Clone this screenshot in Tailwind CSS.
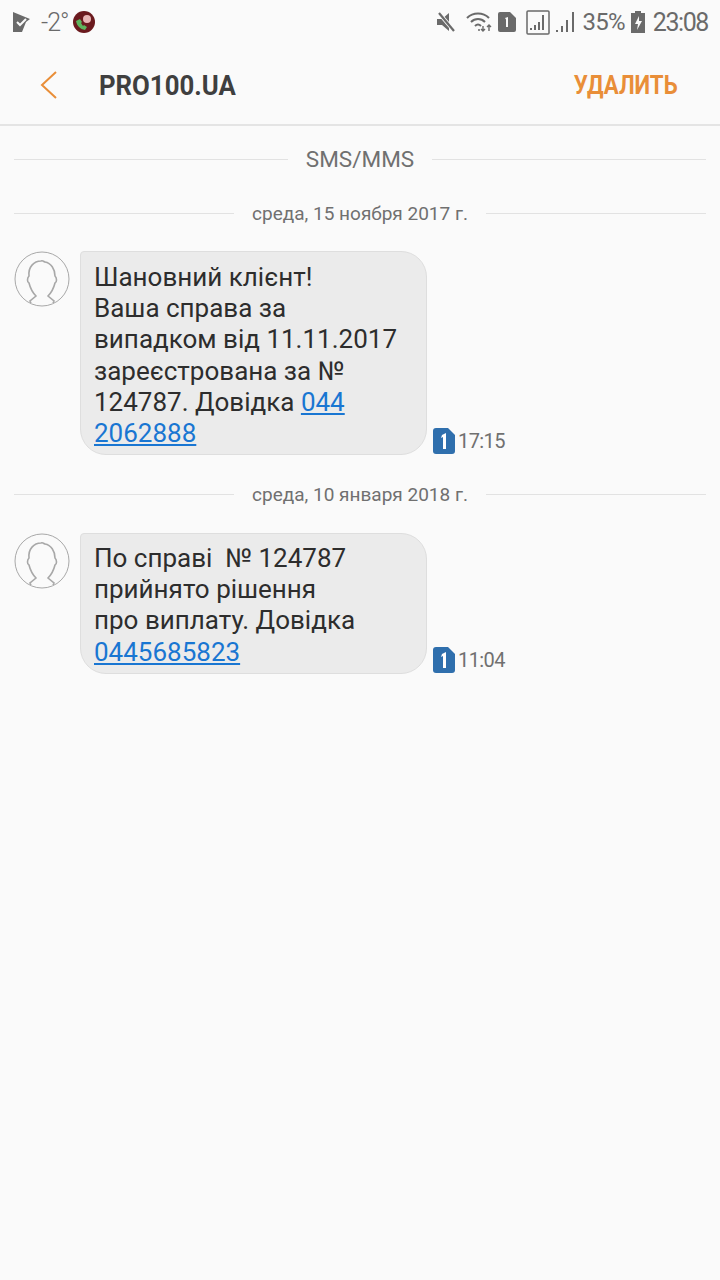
<!DOCTYPE html>
<html lang="uk">
<head>
  <meta charset="UTF-8">
  <title>PRO100.UA</title>
  <script src="https://cdn.jsdelivr.net/npm/@tailwindcss/browser@4"></script>
</head>
<body class="bg-[#fafafa] font-['Roboto',sans-serif] w-[720px] h-[1280px] overflow-hidden">
  <!-- Status bar -->
  <div class="h-[44px] flex items-center justify-between pl-[13px] pr-[12px] text-[#6a6a6a]">
    <div class="flex items-center">
      <svg width="18" height="20" viewBox="0 0 18 20"><path d="M0 0l17 7-4 3-4 10H0z" fill="#6a6a6a"/><path d="M4 10l3 3 6-6" fill="none" stroke="#fafafa" stroke-width="2"/></svg>
      <span class="ml-[10px] text-[25px] leading-none tracking-[-1px] font-light">-2°</span>
      <svg class="ml-[5px]" width="22" height="22" viewBox="0 0 22 22"><circle cx="11" cy="11" r="11" fill="#6b1a1e"/><circle cx="14" cy="8" r="4" fill="#e8b5b5"/><path d="M3 10c1 5 4 8 9 9l2-3-3-2-1 1-2-3 1-1-2-3z" fill="#5db55d"/></svg>
    </div>
    <div class="flex items-center">
      <svg width="21" height="22" viewBox="0 0 21 22" fill="#6a6a6a"><path d="M1 8h5l7-6v18l-7-6H1z"/><path d="M2 1l17 20" stroke="#fafafa" stroke-width="4"/><path d="M3 2l15 18" stroke="#6a6a6a" stroke-width="2.200"/></svg>
      <svg class="ml-[9px]" width="27" height="24" viewBox="0 0 27 24" fill="none" stroke="#6a6a6a" stroke-width="2"><path d="M1 8c6-6 16-6 22 0"/><path d="M5 12c4-4 10-4 14 0"/><path d="M9 16c2-2 4-2 6 0"/><path d="M12 20h2M17 16v5M15 19l2 2 2-2M23 21v-6M21 17l2-2 2 2" stroke-width="1.400"/></svg>
      <svg class="ml-[5px]" width="18" height="20" viewBox="0 0 18 20"><path d="M2 0h10l6 6v12a2 2 0 0 1-2 2H2a2 2 0 0 1-2-2V2a2 2 0 0 1 2-2z" fill="#6a6a6a"/><path d="M7 6l3-1v10H8V7.500z" fill="#fafafa"/></svg>
      <svg class="ml-[10px]" width="24" height="25" viewBox="0 0 24 25" fill="none" stroke="#6a6a6a"><rect x="1" y="1" width="22" height="23" rx="1" stroke-width="1.500"/><path d="M5 20v-2M9 20v-5M13 20v-8M17 20l0-15" stroke-width="2"/></svg>
      <svg class="ml-[5px]" width="20" height="22" viewBox="0 0 20 22" fill="none" stroke="#6a6a6a" stroke-width="2"><path d="M2 21v-2M7 21v-6M12 21V9M18 21V1"/></svg>
      <span class="ml-[8px] text-[24px] leading-none tracking-[-0.8px]">35%</span>
      <svg class="ml-[6px]" width="14" height="22" viewBox="0 0 14 22"><path d="M4 0h6v2h4v20H0V2h4z" fill="#6a6a6a"/><path d="M8 5l-4 8h3l-1 6 5-9H8z" fill="#fafafa"/></svg>
      <span class="ml-[8px] text-[25px] leading-none tracking-[-1.400px]">23:08</span>
    </div>
  </div>

  <!-- Header -->
  <div class="h-[82px] border-b-2 border-[#e4e4e4] flex items-center pl-[40px] pr-[42px]">
    <svg class="mt-[2px]" width="18" height="30" viewBox="0 0 18 30" fill="none" stroke="#e98e38" stroke-width="2"><path d="M16 2L2 15l14 13"/></svg>
    <span class="ml-[41px] mt-[3px] text-[28px] font-bold text-[#3f3f3f] scale-x-[0.92] origin-left">PRO100.UA</span>
    <span class="ml-auto mt-[3px] text-[25px] font-bold text-[#e98e38] scale-x-[0.89] origin-right">УДАЛИТЬ</span>
  </div>

  <!-- Thread -->
  <div class="px-[14px]">
    <div class="h-[66px] flex items-center gap-[18px]">
      <div class="flex-1 h-px bg-[#e2e2e2]"></div>
      <span class="mt-[2px] text-[22.500px] text-[#707070]">SMS/MMS</span>
      <div class="flex-1 h-px bg-[#e2e2e2]"></div>
    </div>

    <div class="h-[40px] flex items-center gap-[18px] mt-[1px]">
      <div class="flex-1 h-px bg-[#e2e2e2]"></div>
      <span class="mt-[3px] text-[19px] text-[#707070]">среда, 15 ноября 2017 г.</span>
      <div class="flex-1 h-px bg-[#e2e2e2]"></div>
    </div>

    <div class="flex items-start mt-[18px]">
      <svg width="56" height="56" viewBox="0 0 56 56" fill="none"><circle cx="28" cy="28" r="27" stroke="#a8a8a8" stroke-width="1"/><path d="M17 52l-1-2 6-5c-4-4-6-9-7-13-2-1-2-5 0-7-1-9 5-15 12-15 2-1 3 1 4 1 6 1 10 7 10 14 2 2 2 6 0 7-1 4-3 9-7 13l6 5-1 2" stroke="#a8a8a8" stroke-width="1.600"/></svg>
      <div class="ml-[10px] w-[347px] h-[204px] bg-[#ebebeb] border border-[#dedede] rounded-[26px] rounded-tl-[4px] pl-[13px] pt-[10px] text-[26px] leading-[31.2px] text-[#2d2d2d]">
        Шановний клієнт!<br>Ваша справа за<br>випадком від 11.11.2017<br>зареєстрована за №<br>124787. Довідка <a class="text-[#1976d2] underline">044<br>2062888</a>
      </div>
      <div class="self-end flex items-center ml-[6px] -mb-[1px]">
        <svg width="22" height="26" viewBox="0 0 22 26"><path d="M3 0h12l7 7v16a3 3 0 0 1-3 3H3a3 3 0 0 1-3-3V3a3 3 0 0 1 3-3z" fill="#2f6fad"/><path d="M9 7l4-2v16h-3V9l-2 1z" fill="#fff"/></svg>
        <span class="ml-[3px] text-[20px] tracking-[-0.6px] text-[#707070]">17:15</span>
      </div>
    </div>

    <div class="h-[40px] flex items-center gap-[18px] mt-[19px]">
      <div class="flex-1 h-px bg-[#e2e2e2]"></div>
      <span class="mt-[3px] text-[19px] text-[#707070]">среда, 10 января 2018 г.</span>
      <div class="flex-1 h-px bg-[#e2e2e2]"></div>
    </div>

    <div class="flex items-start mt-[19px]">
      <svg width="56" height="56" viewBox="0 0 56 56" fill="none"><circle cx="28" cy="28" r="27" stroke="#a8a8a8" stroke-width="1"/><path d="M17 52l-1-2 6-5c-4-4-6-9-7-13-2-1-2-5 0-7-1-9 5-15 12-15 2-1 3 1 4 1 6 1 10 7 10 14 2 2 2 6 0 7-1 4-3 9-7 13l6 5-1 2" stroke="#a8a8a8" stroke-width="1.600"/></svg>
      <div class="ml-[10px] w-[347px] h-[141px] bg-[#ebebeb] border border-[#dedede] rounded-[26px] rounded-tl-[4px] pl-[13px] pt-[9px] text-[26px] leading-[31.2px] text-[#2d2d2d] whitespace-pre">По справі  № 124787
прийнято рішення
про виплату. Довідка
<a class="text-[#1976d2] underline">0445685823</a></div>
      <div class="self-end flex items-center ml-[6px] -mb-[1px]">
        <svg width="22" height="26" viewBox="0 0 22 26"><path d="M3 0h12l7 7v16a3 3 0 0 1-3 3H3a3 3 0 0 1-3-3V3a3 3 0 0 1 3-3z" fill="#2f6fad"/><path d="M9 7l4-2v16h-3V9l-2 1z" fill="#fff"/></svg>
        <span class="ml-[3px] text-[20px] tracking-[-0.6px] text-[#707070]">11:04</span>
      </div>
    </div>
  </div>
</body>
</html>
